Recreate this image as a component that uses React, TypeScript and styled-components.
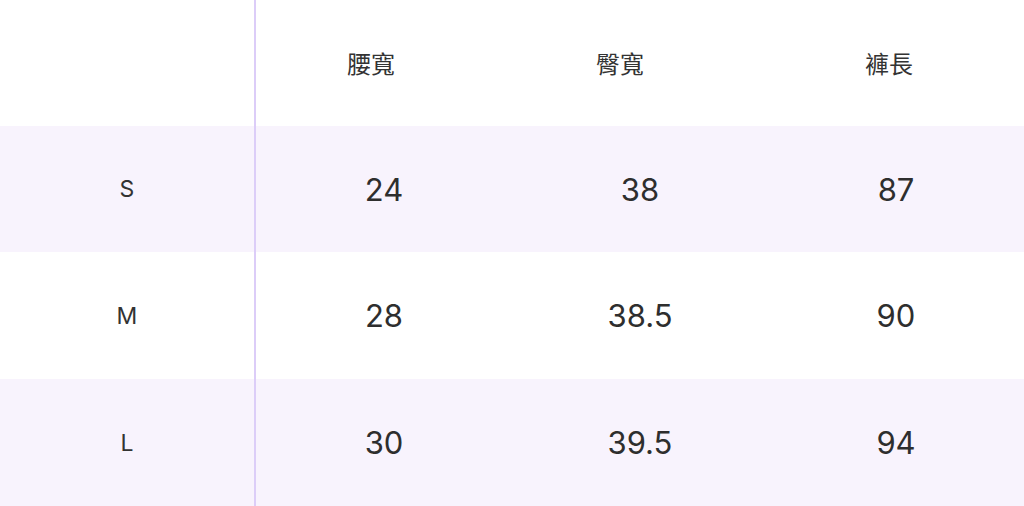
import React from "react";
import styled, { createGlobalStyle } from "styled-components";

const Global = createGlobalStyle`
  html, body { margin: 0; padding: 0; background: #ffffff; }
  body { font-family: Inter, "Noto Sans CJK TC", sans-serif; }
`;

const Table = styled.div`
  width: 1024px;
  height: 506px;
  display: grid;
  grid-template-rows: 126px 126px 127px 127px;
`;

const Row = styled.div<{ $shaded?: boolean; $header?: boolean }>`
  display: grid;
  grid-template-columns: ${(p) => (p.$header ? "256px 230px 268px 270px" : "256px 256px 256px 256px")};
  background: ${(p) => (p.$shaded ? "#f8f3fd" : "#ffffff")};
`;

const LabelCell = styled.div`
  display: flex;
  align-items: center;
  justify-content: center;
  border-right: 2px solid #dccdf8;
  font-family: Inter, sans-serif;
  font-size: 23px;
  color: #333333;
`;

const HeadCell = styled.div`
  display: flex;
  align-items: center;
  justify-content: center;
  font-family: "Noto Sans CJK TC", "Noto Sans CJK SC", sans-serif;
  font-size: 24px;
  color: #333333;
  padding-bottom: 1px;
`;

const ValueCell = styled.div`
  display: flex;
  align-items: center;
  justify-content: center;
  font-family: Inter, sans-serif;
  font-size: 31px;
  color: #2e2e2e;
`;

const headers = ["腰寬", "臀寬", "褲長"];
const rows: { size: string; values: string[] }[] = [
  { size: "S", values: ["24", "38", "87"] },
  { size: "M", values: ["28", "38.5", "90"] },
  { size: "L", values: ["30", "39.5", "94"] },
];

export default function App() {
  return (
    <>
      <Global />
      <Table>
        <Row $header>
          <LabelCell />
          {headers.map((h) => (
            <HeadCell key={h}>{h}</HeadCell>
          ))}
        </Row>
        {rows.map((r, i) => (
          <Row key={r.size} $shaded={i % 2 === 0}>
            <LabelCell>{r.size}</LabelCell>
            {r.values.map((v, j) => (
              <ValueCell key={j}>{v}</ValueCell>
            ))}
          </Row>
        ))}
      </Table>
    </>
  );
}
